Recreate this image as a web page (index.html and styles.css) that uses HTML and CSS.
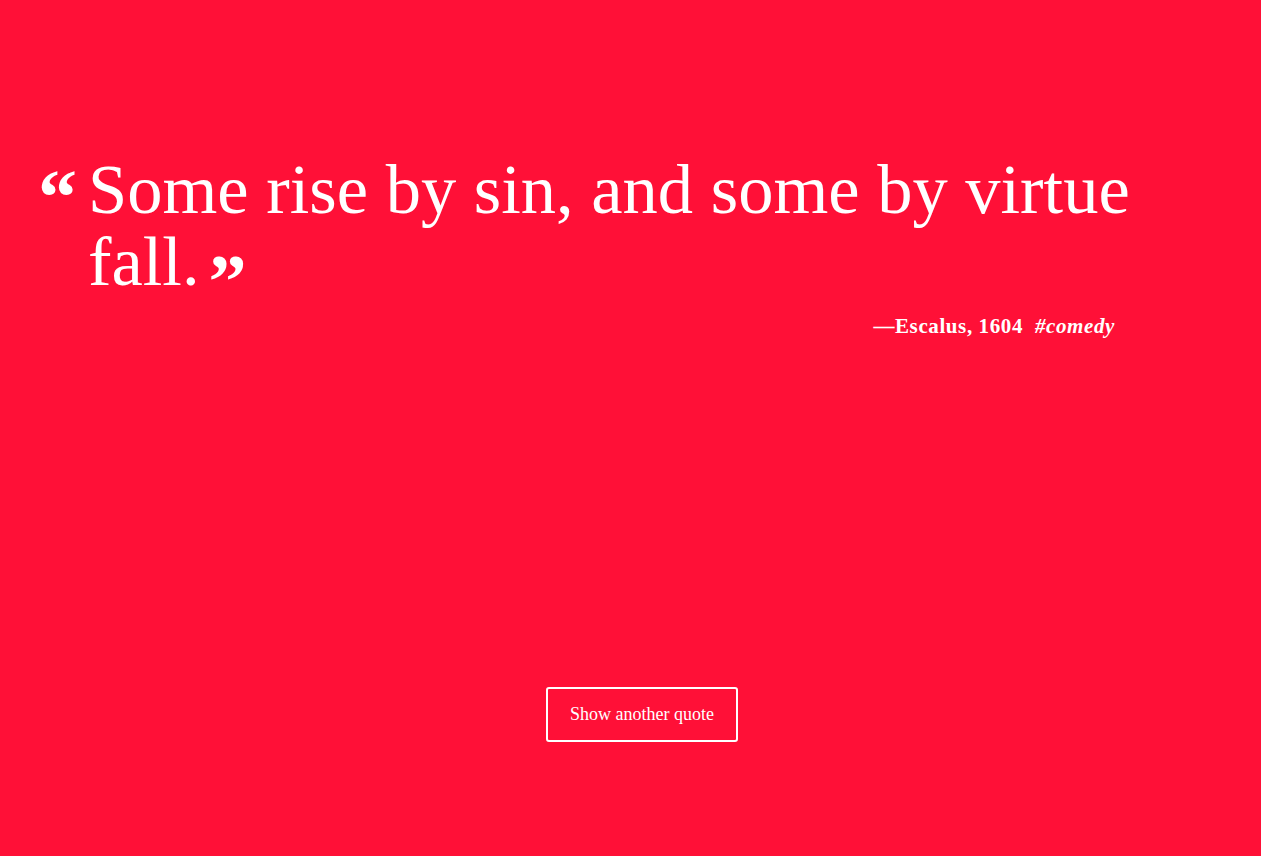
FILE: index.html
```html
<!DOCTYPE html>
<html lang="en">
<head>
<meta charset="utf-8">
<title>Random Quote</title>
<link rel="stylesheet" href="styles.css">
</head>
<body>
<main class="page">
  <section class="quote-box">
    <blockquote class="quote">
      <span class="mark open">&ldquo;</span>
      <p class="quote-text">Some rise by sin, and some by virtue fall.<span class="mark close">&rdquo;</span></p>
    </blockquote>
    <p class="attribution"><span class="author">&mdash;Escalus, 1604</span><span class="tag">#comedy</span></p>
  </section>
  <div class="actions">
    <button class="btn" type="button">Show another quote</button>
  </div>
</main>
</body>
</html>
```
FILE: styles.css
```css
html, body {
  margin: 0;
  padding: 0;
}
body {
  background: #ff1037;
  color: #fff;
  font-family: "Liberation Serif", "DejaVu Serif", serif;
  min-height: 856px;
}
.page {
  display: flex;
  flex-direction: column;
  padding: 153px 0 0 0;
}
.quote-box {
  width: 1200px;
}
.quote {
  margin: 0;
  display: flex;
  align-items: flex-start;
  padding-left: 38px;
}
.mark {
  font-weight: bold;
  font-family: "Liberation Serif", serif;
  line-height: 1;
}
.open {
  flex-shrink: 0;
  font-size: 78px;
  width: 50px;
  margin-top: 5px;
}
.close {
  font-size: 76px;
  margin-left: 9px;
  vertical-align: -22px;
  line-height: 0;
}
.quote-text {
  margin: 0;
  font-size: 70.5px;
  line-height: 72px;
  max-width: 1070px;
}
.attribution {
  margin: 17px 0 0 0;
  padding-right: 85px;
  text-align: right;
  font-size: 21px;
  font-weight: bold;
  letter-spacing: 0.6px;
}
.tag {
  font-style: italic;
  margin-left: 12px;
}
.actions {
  display: flex;
  justify-content: center;
  padding-left: 23px;
  margin-top: 348px;
  width: 1238px;
}
.btn {
  background: transparent;
  color: #fff;
  border: 2px solid #fff;
  border-radius: 3px;
  font-family: "Liberation Serif", serif;
  font-size: 18px;
  width: 192px;
  height: 55px;
  cursor: pointer;
}
```
